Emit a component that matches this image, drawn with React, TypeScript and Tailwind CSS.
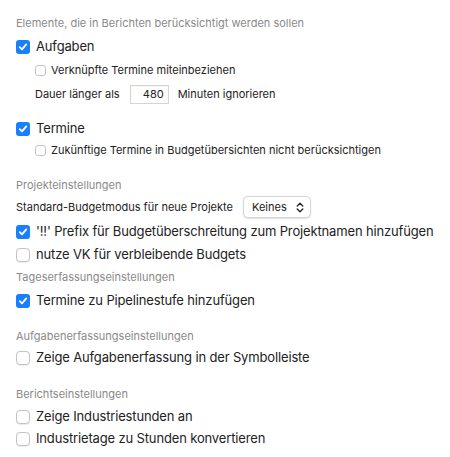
import React from "react";

const font = { fontFamily: "Inter, 'Noto Sans', sans-serif" };

function BigBox({ checked }: { checked?: boolean }) {
  return checked ? (
    <span className="flex h-[14px] w-[14px] shrink-0 items-center justify-center rounded-[3px] bg-[#1a7ffa]">
      <svg width="10" height="10" viewBox="0 0 10 10" fill="none">
        <path d="M1.8 5.2 L4 7.4 L8.3 2.4" stroke="white" strokeWidth="1.8" strokeLinecap="round" strokeLinejoin="round" />
      </svg>
    </span>
  ) : (
    <span className="h-[14px] w-[14px] shrink-0 rounded-[4px] border border-[#c4c4c4] bg-white shadow-[0_0.5px_1px_rgba(0,0,0,0.08)]" />
  );
}

function SmallBox() {
  return <span className="h-[11px] w-[11px] shrink-0 rounded-[3px] border border-[#c4c4c4] bg-white" />;
}

function Header({ children, mt }: { children: React.ReactNode; mt: string }) {
  return <div className={`flex h-[16px] items-center whitespace-nowrap text-[11px] text-[#8a8a8a] ${mt}`}>{children}</div>;
}

function BigRow({ checked, label, mt }: { checked?: boolean; label: string; mt: string }) {
  return (
    <div className={`flex h-[22px] items-center gap-[6px] whitespace-nowrap text-[13px] tracking-[-0.15px] text-[#222222] ${mt}`}>
      <BigBox checked={checked} />
      <span>{label}</span>
    </div>
  );
}

function SmallRow({ label, mt }: { label: string; mt: string }) {
  return (
    <div className={`flex h-[20px] items-center gap-[5px] whitespace-nowrap pl-[19px] text-[11px] text-[#222222] ${mt}`}>
      <SmallBox />
      <span>{label}</span>
    </div>
  );
}

export default function App() {
  return (
    <div className="h-[457px] w-[450px] bg-white px-[16px] pt-[15px]" style={font}>
      <Header mt="mt-0">Elemente, die in Berichten berücksichtigt werden sollen</Header>
      <BigRow checked label="Aufgaben" mt="mt-[5px]" />
      <SmallRow label="Verknüpfte Termine miteinbeziehen" mt="mt-[2px]" />
      <div className="mt-[3px] flex h-[22px] items-center whitespace-nowrap pl-[19px] text-[11px] text-[#222222]">
        <span>Dauer länger als</span>
        <span className="ml-[10px] flex h-[19px] w-[39px] items-center justify-end border border-[#d4d4d4] bg-white pr-[4px] text-[11px] shadow-[inset_0_0.5px_0_rgba(0,0,0,0.08)]">
          480
        </span>
        <span className="ml-[9px]">Minuten ignorieren</span>
      </div>
      <BigRow checked label="Termine" mt="mt-[13px]" />
      <SmallRow label="Zukünftige Termine in Budgetübersichten nicht berücksichtigen" mt="mt-0" />
      <Header mt="mt-[17px]">Projekteinstellungen</Header>
      <div className="mt-[3px] flex h-[22px] items-center whitespace-nowrap text-[11px] text-[#222222]">
        <span>Standard-Budgetmodus für neue Projekte</span>
        <span className="ml-[10px] flex h-[22px] w-[68px] items-center justify-between rounded-[5px] border border-[#d6d6d6] bg-white pl-[8px] pr-[6px] text-[11px] shadow-[0_0.5px_1.5px_rgba(0,0,0,0.12)]">
          <span>Keines</span>
          <svg width="8" height="11" viewBox="0 0 8 11" fill="none">
            <path d="M1.2 4 L4 1.3 L6.8 4" stroke="#222222" strokeWidth="1.3" strokeLinecap="round" strokeLinejoin="round" />
            <path d="M1.2 7 L4 9.7 L6.8 7" stroke="#222222" strokeWidth="1.3" strokeLinecap="round" strokeLinejoin="round" />
          </svg>
        </span>
      </div>
      <BigRow checked label="'!!' Prefix für Budgetüberschreitung zum Projektnamen hinzufügen" mt="mt-[3px]" />
      <BigRow label="nutze VK für verbleibende Budgets" mt="mt-[1px]" />
      <Header mt="mt-[3px]">Tageserfassungseinstellungen</Header>
      <BigRow checked label="Termine zu Pipelinestufe hinzufügen" mt="mt-[5px]" />
      <Header mt="mt-[16px]">Aufgabenerfassungseinstellungen</Header>
      <BigRow label="Zeige Aufgabenerfassung in der Symbolleiste" mt="mt-[3px]" />
      <Header mt="mt-[17px]">Berichtseinstellungen</Header>
      <BigRow label="Zeige Industriestunden an" mt="mt-[4px]" />
      <BigRow label="Industrietage zu Stunden konvertieren" mt="mt-0" />
    </div>
  );
}
